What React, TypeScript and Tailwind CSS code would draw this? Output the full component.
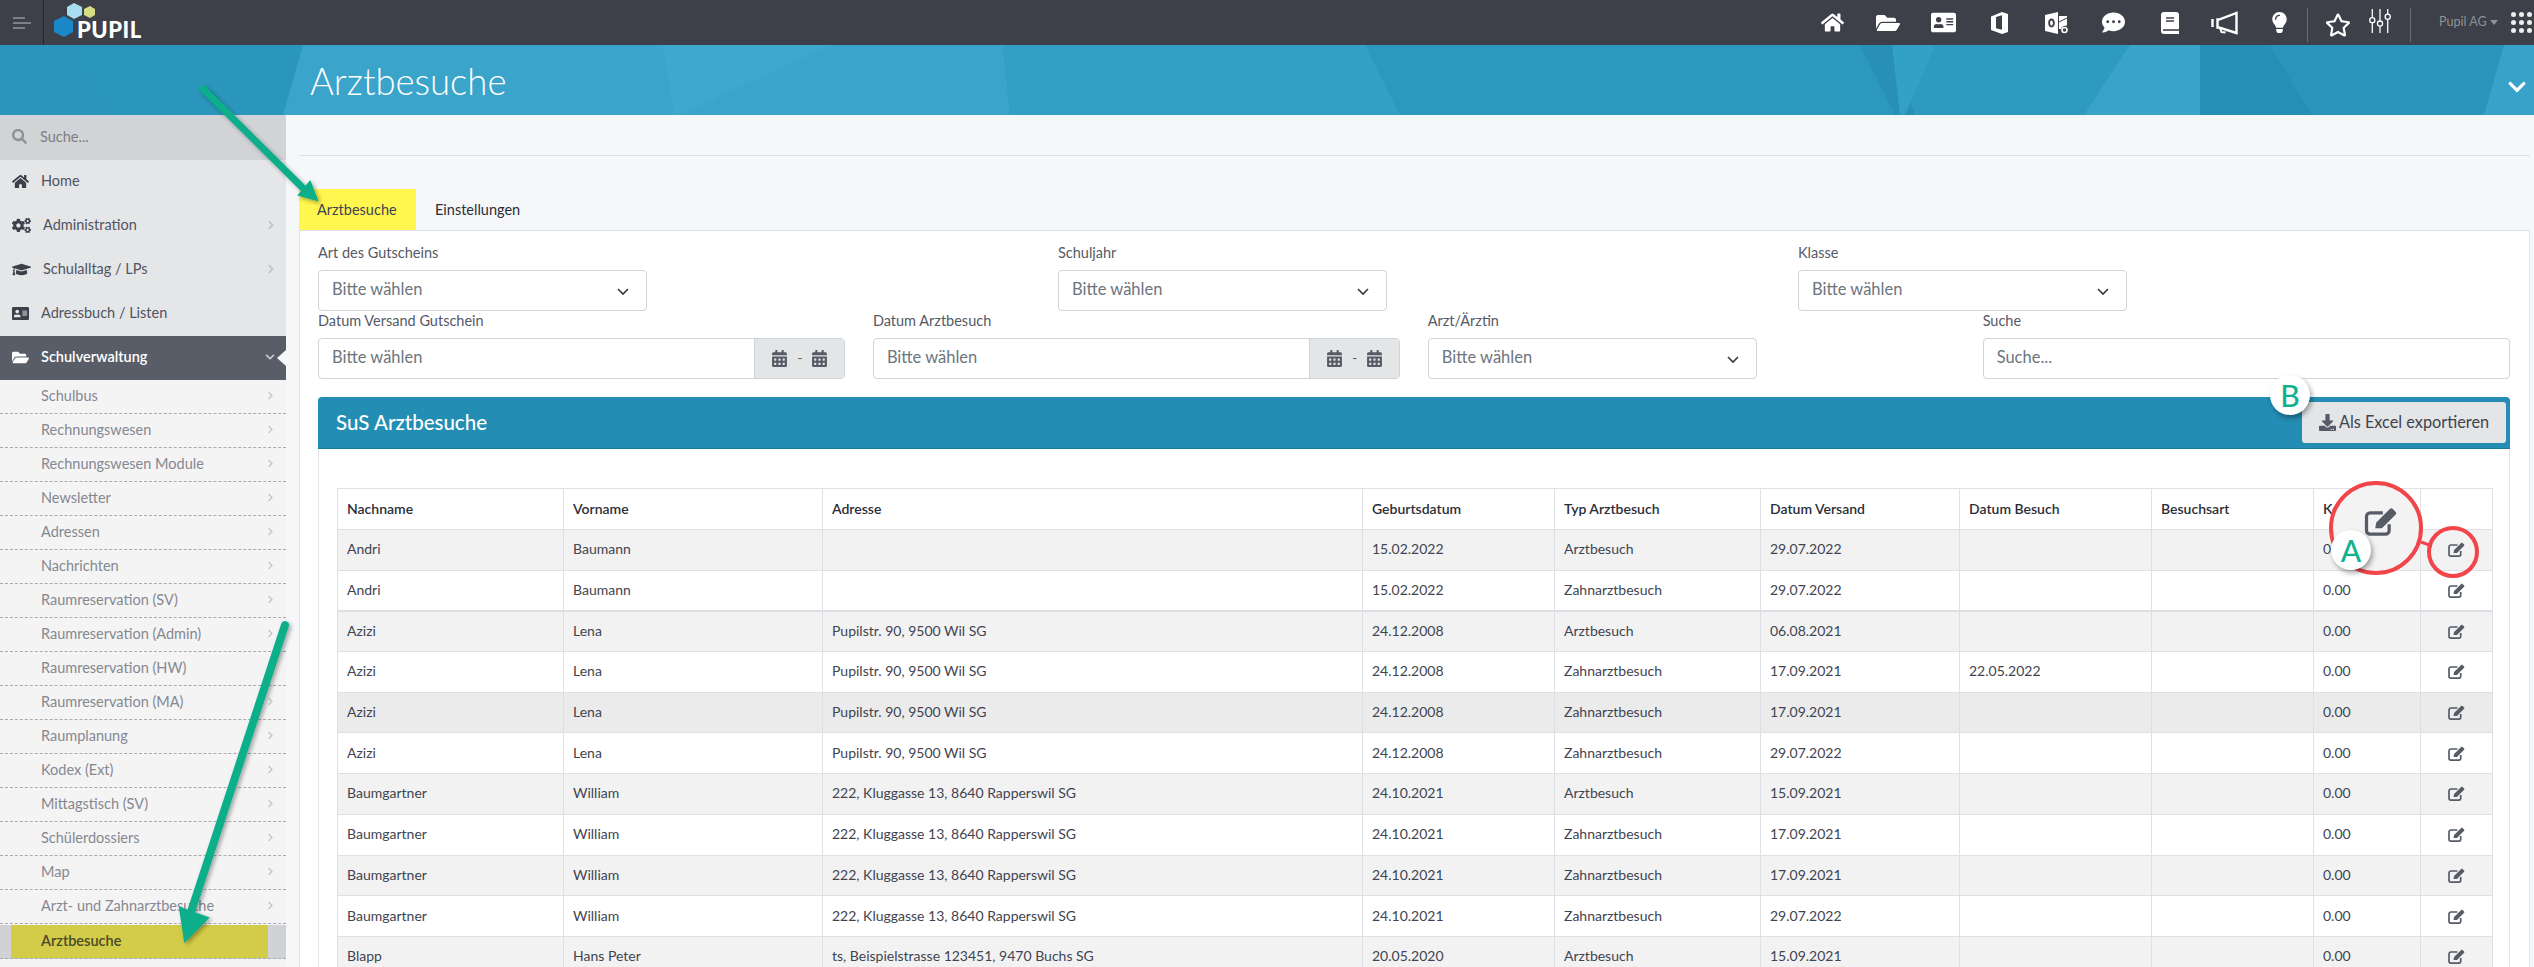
import {
  FaAddressCard,
  FaCalendarAlt,
  FaChevronDown,
  FaChevronRight,
  FaCogs,
  FaCommentDots,
  FaDownload,
  FaFolderOpen,
  FaGraduationCap,
  FaHome,
  FaLightbulb,
  FaRegStar,
  FaSearch,
} from "react-icons/fa";

const subItems = [
  "Schulbus",
  "Rechnungswesen",
  "Rechnungswesen Module",
  "Newsletter",
  "Adressen",
  "Nachrichten",
  "Raumreservation (SV)",
  "Raumreservation (Admin)",
  "Raumreservation (HW)",
  "Raumreservation (MA)",
  "Raumplanung",
  "Kodex (Ext)",
  "Mittagstisch (SV)",
  "Schülerdossiers",
  "Map",
  "Arzt- und Zahnarztbesuche",
];

const pupilAddr = "Pupilstr. 90, 9500 Wil SG";
const klugAddr = "222, Kluggasse 13, 8640 Rapperswil SG";

const rows = [
  ["Andri", "Baumann", "", "15.02.2022", "Arztbesuch", "29.07.2022", ""],
  ["Andri", "Baumann", "", "15.02.2022", "Zahnarztbesuch", "29.07.2022", ""],
  ["Azizi", "Lena", pupilAddr, "24.12.2008", "Arztbesuch", "06.08.2021", ""],
  ["Azizi", "Lena", pupilAddr, "24.12.2008", "Zahnarztbesuch", "17.09.2021", "22.05.2022"],
  ["Azizi", "Lena", pupilAddr, "24.12.2008", "Zahnarztbesuch", "17.09.2021", ""],
  ["Azizi", "Lena", pupilAddr, "24.12.2008", "Zahnarztbesuch", "29.07.2022", ""],
  ["Baumgartner", "William", klugAddr, "24.10.2021", "Arztbesuch", "15.09.2021", ""],
  ["Baumgartner", "William", klugAddr, "24.10.2021", "Zahnarztbesuch", "17.09.2021", ""],
  ["Baumgartner", "William", klugAddr, "24.10.2021", "Zahnarztbesuch", "17.09.2021", ""],
  ["Baumgartner", "William", klugAddr, "24.10.2021", "Zahnarztbesuch", "29.07.2022", ""],
  ["Blapp", "Hans Peter", "ts, Beispielstrasse 123451, 9470 Buchs SG", "20.05.2020", "Arztbesuch", "15.09.2021", ""],
];

const headers = [
  "Nachname",
  "Vorname",
  "Adresse",
  "Geburtsdatum",
  "Typ Arztbesuch",
  "Datum Versand",
  "Datum Besuch",
  "Besuchsart",
  "Kosten",
  "",
];

const EditIcon = ({ width, height }: { width: number; height: number }) => (
  <svg width={width} height={height} viewBox="0 0 18 16" className="text-[#565b66]">
    <path
      d="M10 3.200H3a2 2 0 0 0-2 2V13a2 2 0 0 0 2 2h8.500a2 2 0 0 0 2-2V9.500"
      fill="none"
      stroke="currentColor"
      strokeWidth="1.800"
    />
    <path
      d="M5.800 11.700l.6-3.100L14 1a1 1 0 0 1 1.400 0l1.700 1.700a1 1 0 0 1 0 1.400L9.500 11.700z"
      fill="currentColor"
    />
  </svg>
);

const Logo = () => (
  <div className="relative ml-[10px] w-[92px] h-[45px]">
    <svg className="absolute inset-0" width="92" height="45" viewBox="0 0 92 45">
      <polygon points="0,21 10,16 19,21 19,32 10,37 0,32" fill="#1b86c8" />
      <polygon points="13,7 20,3 28,7 28,15 20,19 13,15" fill="#a8dcf0" />
      <polygon points="30,9 36,6 41,9 41,15 36,18 30,15" fill="#d6dd85" />
    </svg>
    <span className="absolute left-[23px] top-[17px] text-[22px] leading-[25px] font-black tracking-[0.5px] text-white">
      PUPIL
    </span>
  </div>
);

const OfficeIcon = () => (
  <svg width="17" height="22" viewBox="0 0 17 22">
    <path
      fillRule="evenodd"
      d="M0 4.500L11 0l6 2v18l-6 2-11-4zM11 3.200L5 5v11.200l6 1.600z"
      fill="#fff"
    />
  </svg>
);

const OutlookIcon = () => (
  <svg width="23" height="22" viewBox="0 0 23 22">
    <path
      fillRule="evenodd"
      d="M0 3L13 0v22L0 19zM6.500 6.600c-2 0-3.300 1.800-3.300 4.400s1.300 4.400 3.300 4.400 3.300-1.800 3.300-4.400-1.300-4.400-3.300-4.400zM6.500 8.400c.9 0 1.400 1.100 1.400 2.600s-.5 2.600-1.400 2.600-1.400-1.100-1.400-2.600.5-2.600 1.400-2.600z"
      fill="#fff"
    />
    <path d="M14 4h8v9l-1 1a4 4 0 0 0-5 3h-2z" fill="#fff" />
    <path d="M14 10l8-4" stroke="#3d4049" strokeWidth="1" />
    <circle cx="19.500" cy="18" r="2.500" fill="none" stroke="#fff" strokeWidth="1.600" />
  </svg>
);

const BookIcon = () => (
  <svg width="18" height="22" viewBox="0 0 18 22">
    <path d="M3 0h12a3 3 0 0 1 3 3v19H3a3 3 0 0 1-3-3V3a3 3 0 0 1 3-3z" fill="#fff" />
    <path d="M5 6h8M5 9h8" stroke="#3d4049" strokeWidth="1.300" />
    <path d="M2 18h16" stroke="#3d4049" strokeWidth="1.600" />
  </svg>
);

const HornIcon = () => (
  <svg width="28" height="24" viewBox="0 0 28 24" fill="none" stroke="#fff" strokeWidth="2.400">
    <path d="M25.500 2v20L8 16.500H6.500v-8H8z" strokeLinejoin="miter" />
    <path d="M1.500 8v8" />
    <path d="M9 17l1.500 4 4 .5" strokeWidth="2" />
  </svg>
);

const SlidersIcon = () => (
  <svg width="28" height="28" viewBox="0 0 28 28" fill="none" stroke="#fff" strokeWidth="1.500">
    <path d="M5 0v10M5 16v12M14 0v14M14 20v8M23 0v6M23 12v16" />
    <circle cx="5" cy="13" r="3" />
    <circle cx="14" cy="17" r="3" />
    <circle cx="23" cy="9" r="3" />
  </svg>
);

const AppsIcon = () => (
  <div className="grid grid-cols-3 gap-[3px]">
    {[...Array(9)].map((_, i) => (
      <span key={i} className="w-[5px] h-[5px] rounded-full bg-[#eceded]" />
    ))}
  </div>
);

const TopBar = () => (
  <header className="h-[45px] bg-[#3d4049] flex items-center">
    <div className="w-[44px] h-[45px] border-r border-[#23252b] flex flex-col justify-center gap-[3px] pl-[13px]">
      <span className="block w-[12px] h-[2px] bg-[#7d8086]" />
      <span className="block w-[18px] h-[2px] bg-[#7d8086]" />
      <span className="block w-[12px] h-[2px] bg-[#7d8086]" />
    </div>
    <Logo />
    <div className="ml-auto flex items-center h-[45px] text-white">
      <div className="w-[56px] flex justify-center"><FaHome size={23} /></div>
      <div className="w-[56px] flex justify-center"><FaFolderOpen size={24} /></div>
      <div className="w-[55px] flex justify-center"><FaAddressCard size={25} /></div>
      <div className="w-[57px] flex justify-center"><OfficeIcon /></div>
      <div className="w-[57px] flex justify-center"><OutlookIcon /></div>
      <div className="w-[57px] flex justify-center"><FaCommentDots size={23} /></div>
      <div className="w-[56px] flex justify-center"><BookIcon /></div>
      <div className="w-[54px] flex justify-center"><HornIcon /></div>
      <div className="w-[55px] flex justify-center"><FaLightbulb size={21} /></div>
      <div className="w-[1px] h-[34px] bg-[#696c73] mt-[4px]" />
      <div className="w-[60px] flex justify-center pt-[5px]"><FaRegStar size={26} /></div>
      <div className="w-[24px] mr-[18px] flex justify-center pb-[3px]"><SlidersIcon /></div>
      <div className="w-[1px] h-[34px] bg-[#696c73] mt-[4px]" />
      <div className="ml-[28px] w-[57px] flex items-center text-[#8f9197] text-[12.5px] whitespace-nowrap">
        Pupil AG
        <span className="w-0 h-0 border-x-[4px] border-x-transparent border-t-[5px] border-t-[#8f9197] ml-[3px]" />
      </div>
      <div className="ml-[15px] mr-[2px]"><AppsIcon /></div>
    </div>
  </header>
);

const Banner = () => (
  <div className="relative h-[70px] bg-[#2f9abf] overflow-hidden">
    <svg className="absolute inset-0" width="2534" height="70" viewBox="0 0 2534 70">
      <polygon points="0,0 69,0 111,70 0,70" fill="#2b95bb" />
      <polygon points="69,0 303,0 283,70 111,70" fill="#2b96bc" />
      <polygon points="303,0 1003,0 1010,70 283,70" fill="#3aa4ca" />
      <polygon points="663,0 830,0 680,70 674,70" fill="#3ea8cd" />
      <polygon points="1003,0 1365,0 1400,70 1010,70" fill="#349fc5" />
      <polygon points="1365,0 1865,0 1895,70 1400,70" fill="#2d98be" />
      <polygon points="1860,0 1892,0 1915,70 1895,70" fill="#2890b5" />
      <polygon points="1892,0 1935,0 1905,70 1900,70" fill="#33a0c5" />
      <polygon points="2130,0 2200,0 2200,70 2084,70" fill="#39a3c8" />
      <polygon points="2200,0 2270,0 2312,70 2200,70" fill="#268fb5" />
      <polygon points="2270,0 2504,0 2484,70 2312,70" fill="#2b94ba" />
      <polygon points="2504,0 2534,0 2534,70 2484,70" fill="#38a2c8" />
    </svg>
    <div className="relative h-[70px] pl-[310px] pt-[2px] flex items-center">
      <h1 className="text-[36.5px] font-light text-white leading-none">Arztbesuche</h1>
    </div>
    <FaChevronDown size={20} className="absolute left-[2507px] top-[32px] text-white" />
  </div>
);

const Sidebar = () => (
  <aside className="w-[286px] shrink-0 bg-[#f4f4f4] text-[14.5px]">
    <div className="h-[45px] bg-[#d2d3d6] flex items-center pl-[12px] pb-[2px] gap-[13px] text-[#7b7e86]">
      <FaSearch size={15} className="text-[#8d9096]" />
      Suche...
    </div>
    <div className="bg-[#e5e6e8] text-[#50545f]">
      <div className="h-[44px] flex items-center pl-[12px] pb-[2px]">
        <FaHome size={17} className="text-[#3d4049]" />
        <span className="ml-[12px]">Home</span>
      </div>
      <div className="h-[44px] flex items-center pl-[12px] pr-[10px] pb-[2px]">
        <FaCogs size={19} className="text-[#3d4049]" />
        <span className="ml-[12px]">Administration</span>
        <FaChevronRight size={10} className="ml-auto text-[#bfc1c5]" />
      </div>
      <div className="h-[44px] flex items-center pl-[12px] pr-[10px] pb-[2px]">
        <FaGraduationCap size={19} className="text-[#3d4049]" />
        <span className="ml-[12px]">Schulalltag / LPs</span>
        <FaChevronRight size={10} className="ml-auto text-[#bfc1c5]" />
      </div>
      <div className="h-[44px] flex items-center pl-[12px] pb-[2px]">
        <FaAddressCard size={17} className="text-[#3d4049]" />
        <span className="ml-[12px]">Adressbuch / Listen</span>
      </div>
    </div>
    <div className="relative h-[44px] bg-[#595d67] text-white font-semibold flex items-center pl-[12px] pr-[10px] pb-[2px]">
      <FaFolderOpen size={17} />
      <span className="ml-[12px]">Schulverwaltung</span>
      <FaChevronDown size={10} className="ml-auto mr-[1px] text-[#c9cacd]" />
      <span className="absolute right-0 top-[14px] w-0 h-0 border-y-[8px] border-y-transparent border-r-[9px] border-r-[#f6f7f9]" />
    </div>
    {subItems.map((item) => (
      <div
        key={item}
        className="h-[34px] flex items-center pl-[41px] pr-[11px] pb-[2px] border-b border-dashed border-[#a9abae] text-[#858891]"
      >
        {item}
        <FaChevronRight size={9} className="ml-auto text-[#c5c6c9]" />
      </div>
    ))}
    <div className="h-[34px] mt-[1px] bg-[#d0d2d5] pl-[11px] pr-[18px] border-b border-dashed border-[#a9abae]">
      <div className="h-[33px] bg-[#d3cc48] flex items-center pl-[30px] pb-[2px] font-semibold text-[#4a4a2c]">
        Arztbesuche
      </div>
    </div>
  </aside>
);

const Label = ({ text }: { text: string }) => (
  <div className="h-[20px] mb-[6px] text-[14.5px] leading-[18px] text-[#555a66]">{text}</div>
);

const SelectBox = ({ text }: { text: string }) => (
  <div className="w-[329px] h-[41px] bg-white border border-[#ced4da] rounded-[4px] flex items-center justify-between pl-[13px] pr-[16px] text-[16.5px] text-[#6c757d]">
    <span className="pb-[2px]">{text}</span>
    <svg width="14" height="14" viewBox="0 0 14 14" fill="none" stroke="#343a40" strokeWidth="1.600">
      <path d="M2 5l5 5 5-5" />
    </svg>
  </div>
);

const DateRange = () => (
  <div className="h-[41px] bg-white border border-[#ced4da] rounded-[4px] flex items-center text-[16.5px] text-[#6c757d] overflow-hidden">
    <span className="pl-[13px] pb-[2px]">Bitte wählen</span>
    <div className="ml-auto w-[90px] h-full bg-[#e4e5e7] border-l border-[#ced4da] flex items-center justify-center gap-[9px] text-[#565b66]">
      <FaCalendarAlt size={17} />
      <span className="text-[13px]">-</span>
      <FaCalendarAlt size={17} />
    </div>
  </div>
);

const Filters = () => (
  <>
    <div className="grid grid-cols-[740px_740px_1fr] pt-[13px]">
      <div>
        <Label text="Art des Gutscheins" />
        <SelectBox text="Bitte wählen" />
      </div>
      <div>
        <Label text="Schuljahr" />
        <SelectBox text="Bitte wählen" />
      </div>
      <div>
        <Label text="Klasse" />
        <SelectBox text="Bitte wählen" />
      </div>
    </div>
    <div className="grid grid-cols-4 gap-x-[27.5px] mt-[1px]">
      <div>
        <Label text="Datum Versand Gutschein" />
        <DateRange />
      </div>
      <div>
        <Label text="Datum Arztbesuch" />
        <DateRange />
      </div>
      <div>
        <Label text="Arzt/Ärztin" />
        <SelectBox text="Bitte wählen" />
      </div>
      <div>
        <Label text="Suche" />
        <div className="h-[41px] bg-white border border-[#ced4da] rounded-[4px] flex items-center pl-[13px] pb-[2px] text-[16.5px] text-[#6c757d]">
          Suche...
        </div>
      </div>
    </div>
  </>
);

const VisitTable = () => (
  <table className="table-fixed border-collapse w-[2155px] text-[14px] text-[#3f4450]">
    <colgroup>
      <col className="w-[226px]" />
      <col className="w-[259px]" />
      <col className="w-[540px]" />
      <col className="w-[192px]" />
      <col className="w-[206px]" />
      <col className="w-[199px]" />
      <col className="w-[192px]" />
      <col className="w-[162px]" />
      <col className="w-[107px]" />
      <col className="w-[72px]" />
    </colgroup>
    <thead>
      <tr className="h-[41px]">
        {headers.map((h, i) => (
          <th key={i} className="border border-[#dee0e6] pl-[9px] pb-[2px] text-left font-semibold text-[#2b2e38]">
            {h}
          </th>
        ))}
      </tr>
    </thead>
    <tbody>
      {rows.map((row, i) => (
        <tr
          key={i}
          className={`h-[40.7px] ${i === 4 ? "bg-[#ebebec]" : i % 2 === 0 ? "bg-[#f2f2f3]" : "bg-white"} ${i === 2 ? "border-t-2 border-[#dee0e6]" : ""}`}
        >
          {row.map((cell, j) => (
            <td key={j} className="border border-[#dee0e6] pl-[9px] pb-[2px]">
              {cell}
            </td>
          ))}
          <td className="border border-[#dee0e6] pl-[9px]" />
          <td className="border border-[#dee0e6] pl-[9px] pb-[2px]">0.00</td>
          <td className="border border-[#dee0e6]">
            <div className="flex justify-center">
              <EditIcon width={17} height={15} />
            </div>
          </td>
        </tr>
      ))}
    </tbody>
  </table>
);

const Content = () => (
  <main className="flex-1 min-w-0 bg-[#f6f7f9] pl-[13px] pr-[4px]">
    <div className="mt-[40px] border-t border-[#dfe1e5]" />
    <div className="mt-[33px] h-[42px] flex border-b border-[#dee0e6] text-[14.5px]">
      <div className="w-[117px] bg-[#fff64f] flex items-center pl-[18px] text-[#3f4450]">Arztbesuche</div>
      <div className="flex items-center pl-[19px] text-[#2b2e38]">Einstellungen</div>
    </div>
    <div className="bg-white border-x border-[#e3e5ea] pl-[18px] pr-[19px] min-h-[740px]">
      <Filters />
      <section className="mt-[18px]">
        <div className="h-[52px] bg-[#238db3] border-b border-[#1b7a9c] rounded-t-[4px] flex items-center justify-between pl-[18px] pr-[4px]">
          <h2 className="text-[20.5px] font-medium text-white">SuS Arztbesuche</h2>
          <button type="button" className="w-[204px] h-[41px] bg-[#e4e5e7] rounded-[3px] flex items-center justify-center gap-[3px] text-[16.3px] text-[#3f4450] whitespace-nowrap">
            <FaDownload size={17} className="text-[#565b66]" />
            Als Excel exportieren
          </button>
        </div>
        <div className="border-x border-[#e3e5ea] px-[18px] pt-[39px]">
          <VisitTable />
        </div>
      </section>
    </div>
  </main>
);

const Overlay = () => (
  <>
    <svg className="absolute left-0 top-0 pointer-events-none" width="2534" height="967" viewBox="0 0 2534 967">
      <defs>
        <filter id="soft" x="-20%" y="-20%" width="140%" height="140%">
          <feDropShadow dx="2" dy="2" stdDeviation="2" floodColor="#000" floodOpacity="0.35" />
        </filter>
      </defs>
      <g filter="url(#soft)" fill="#0aae8a" stroke="#0aae8a">
        <path d="M203 89L307 192" strokeWidth="7" strokeLinecap="round" />
        <polygon points="310,182 299,195 317,200" strokeWidth="2" />
        <path d="M285 625L190 915" strokeWidth="8" strokeLinecap="round" />
        <polygon points="180,908 208,918 185,941" strokeWidth="2" />
      </g>
      <circle cx="2376" cy="528" r="45" fill="#f3f3f4" stroke="#f2454a" strokeWidth="4" />
      <circle cx="2453" cy="552" r="24" fill="none" stroke="#f2454a" strokeWidth="4" />
      <path d="M2421 542L2432 546" stroke="#f2454a" strokeWidth="3" />
    </svg>
    <div className="absolute left-[2364px] top-[507px]">
      <EditIcon width={34} height={29} />
    </div>
    <div className="absolute left-[2331px] top-[530px] w-[40px] h-[40px] rounded-full bg-white shadow-[2px_3px_5px_rgba(0,0,0,0.35)] flex items-center justify-center text-[30px] font-medium text-[#10b28f]">
      A
    </div>
    <div className="absolute left-[2270px] top-[375px] w-[40px] h-[40px] rounded-full bg-white shadow-[2px_3px_5px_rgba(0,0,0,0.35)] flex items-center justify-center text-[30px] font-medium text-[#10b28f]">
      B
    </div>
  </>
);

export default function App() {
  return (
    <div className="relative w-[2534px] h-[967px] overflow-hidden bg-[#f6f7f9] font-['Lato',sans-serif]">
      <TopBar />
      <Banner />
      <div className="flex h-[852px]">
        <Sidebar />
        <Content />
      </div>
      <Overlay />
    </div>
  );
}
